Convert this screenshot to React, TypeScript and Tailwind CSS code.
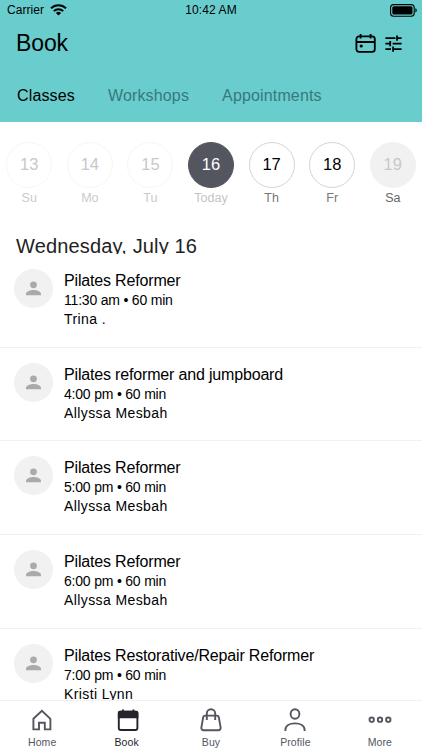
import React from 'react';

interface Day {
  date: number;
  label: string;
  circle: string;
  text: string;
}

interface ClassItem {
  title: string;
  time: string;
  instructor: string;
}

const pastDay = 'border-[#f6f6f6] text-[#c8c8c8]';
const openDay = 'border-[#d4d4d4] text-black';

const days: Day[] = [
  { date: 13, label: 'Su', circle: pastDay, text: 'text-[#cacaca]' },
  { date: 14, label: 'Mo', circle: pastDay, text: 'text-[#cacaca]' },
  { date: 15, label: 'Tu', circle: pastDay, text: 'text-[#cacaca]' },
  { date: 16, label: 'Today', circle: 'border-[#53555f] bg-[#53555f] text-white', text: 'text-[#c4c4c4]' },
  { date: 17, label: 'Th', circle: openDay, text: 'text-[#777]' },
  { date: 18, label: 'Fr', circle: openDay, text: 'text-[#777]' },
  { date: 19, label: 'Sa', circle: 'border-[#f1f1f1] bg-[#f1f1f1] text-[#c8c8c8]', text: 'text-[#666]' },
];

const classes: ClassItem[] = [
  { title: 'Pilates Reformer', time: '11:30 am • 60 min', instructor: 'Trina .' },
  { title: 'Pilates reformer and jumpboard', time: '4:00 pm • 60 min', instructor: 'Allyssa Mesbah' },
  { title: 'Pilates Reformer', time: '5:00 pm • 60 min', instructor: 'Allyssa Mesbah' },
  { title: 'Pilates Reformer', time: '6:00 pm • 60 min', instructor: 'Allyssa Mesbah' },
  { title: 'Pilates Restorative/Repair Reformer', time: '7:00 pm • 60 min', instructor: 'Kristi Lynn' },
];

const StatusBar = () => (
  <div className="grid h-5 grid-cols-3 items-center pl-[7px] pr-1 text-[12px] leading-5">
    <div className="flex items-center gap-[6px]">
      <span className="tracking-[0.05px]">Carrier</span>
      <svg width="17" height="12" viewBox="0 0 17 12" fill="none" stroke="black" strokeWidth="2">
        <path d="M1 4.3a10.6 10.6 0 0 1 15 0" />
        <path d="M3.8 7.1a6.7 6.7 0 0 1 9.4 0" />
        <path d="M8.5 11.6 5.9 9a3.7 3.7 0 0 1 5.2 0Z" fill="black" stroke="none" />
      </svg>
    </div>
    <span className="pr-[3px] text-center tracking-[0.1px]">10:42 AM</span>
    <svg className="justify-self-end" width="28" height="13" viewBox="0 0 28 13">
      <rect x=".6" y=".6" width="23.6" height="11.6" rx="3" fill="none" stroke="black" strokeWidth="1.1" />
      <rect x="2.3" y="2.3" width="20.2" height="8.2" rx="1.5" />
      <path d="M25.4 4.3c1.8.5 1.8 3.7 0 4.2Z" />
    </svg>
  </div>
);

const Header = () => (
  <header className="h-[122px] shrink-0 bg-[#69cccd] text-black">
    <StatusBar />
    <div className="flex h-[46px] items-center justify-between pl-4 pr-[20px]">
      <h1 className="text-[23px] leading-[45px] tracking-[-0.1px]">Book</h1>
      <div className="flex items-center gap-[9px]">
        <svg width="21" height="19" viewBox="0 0 21 19" fill="none" stroke="black" strokeWidth="1.8">
          <rect x="1.4" y="2.4" width="18.4" height="15.4" rx="2.6" />
          <path d="M1.4 8h18.4M5.6 0v4.6M15.6 0v4.6" />
          <circle cx="6.2" cy="12" r="1.6" fill="black" stroke="none" />
        </svg>
        <svg width="17" height="17" viewBox="0 0 17 17" fill="none" stroke="black" strokeWidth="1.8">
          <path d="M.4 3.2h10M12 .6v5.2M12 3.2h4.6M.4 8.7h4.8M5.2 6.1v5.2M7.6 8.7h9M.4 14.1H6M8.1 11.5v5.2M8.1 14.1h8.5" />
        </svg>
      </div>
    </div>
    <nav className="flex h-[60px] items-center gap-[33px] pl-[17px] text-[16px] tracking-[0.15px] text-[#367a7c]">
      <span className="text-black">Classes</span>
      <span>Workshops</span>
      <span>Appointments</span>
    </nav>
  </header>
);

const DayStrip = () => (
  <div className="flex h-[112px] shrink-0 justify-center pt-[19.5px]">
    {days.map((day) => (
      <div key={day.date} className="flex w-[60.6px] shrink-0 flex-col items-center">
        <div className={`flex size-[46px] items-center justify-center rounded-full border text-[16.5px] ${day.circle}`}>
          {day.date}
        </div>
        <span className={`mt-px text-[12.5px] leading-[18px] ${day.text}`}>{day.label}</span>
      </div>
    ))}
  </div>
);

const ClassRow: React.FC<{ item: ClassItem }> = ({ item }) => (
  <li className="flex h-[93.7px] shrink-0 gap-[11px] border-b border-[#f1f1f1] pl-[14px] pt-[15px] text-black">
    <div className="flex size-[39px] items-center justify-center rounded-full bg-[#f1f1f1]">
      <svg width="15" height="15" viewBox="0 0 15 15" fill="#aaa">
        <circle cx="7.5" cy="3.8" r="3.4" />
        <path d="M0 14.3v-1.6c0-2.4 4.6-3.8 7.5-3.8s7.5 1.4 7.5 3.8v1.6Z" />
      </svg>
    </div>
    <div>
      <p className="text-[16px] leading-6 tracking-[-0.17px]">{item.title}</p>
      <p className="-mt-px text-[14px] leading-[17px] tracking-[-0.2px]">{item.time}</p>
      <p className="text-[14px] leading-[20px] tracking-[0.4px]">{item.instructor}</p>
    </div>
  </li>
);

const tabs = [
  {
    label: 'Home',
    icon: <path d="M3.4 10.8 11.9 2.8l8.5 8v10.6h-5.6v-6.6H9v6.6H3.4Z" />,
  },
  {
    label: 'Book',
    icon: (
      <>
        <rect x="3.8" y="3.6" width="18.6" height="18.4" rx="2" />
        <path d="M3.8 4.6c0-.6.4-1 1-1h16.6c.6 0 1 .4 1 1v4.8H3.8ZM8 1.4v3M18.4 1.4v3" fill="currentColor" />
      </>
    ),
  },
  {
    label: 'Buy',
    icon: (
      <>
        <path d="M6.2 7.6h11.6c1 0 1.8.6 2 1.6l1.8 10.2c.3 1.6-.6 2.8-2.2 2.8H4.6c-1.6 0-2.5-1.2-2.2-2.8L4.2 9.2c.2-1 1-1.6 2-1.6Z" />
        <path d="M7.8 12V5.4a4.2 4.2 0 0 1 8.4 0V12" />
      </>
    ),
  },
  {
    label: 'Profile',
    icon: (
      <>
        <ellipse cx="12" cy="6" rx="4.4" ry="4.8" />
        <path d="M2.4 23v-1C2.4 17.8 6.6 15.4 12 15.4s9.6 2.4 9.6 6.6v1" />
      </>
    ),
  },
  {
    label: 'More',
    icon: (
      <>
        <circle cx="3.7" cy="11.7" r="2.2" />
        <circle cx="12" cy="11.7" r="2.2" />
        <circle cx="20.3" cy="11.7" r="2.2" />
      </>
    ),
  },
];

const TabBar = () => (
  <nav className="grid h-[50px] shrink-0 grid-cols-5 border-t border-[#f1f1f1] bg-white">
    {tabs.map((tab) => (
      <div
        key={tab.label}
        className={`flex flex-col items-center pt-[7px] ${tab.label === 'Book' ? 'text-[#24252c]' : 'text-[#53555f]'}`}
      >
        <svg className="overflow-visible" width="24" height="24" viewBox="0 0 24 24" fill="none" stroke="currentColor" strokeWidth="1.9">
          {tab.icon}
        </svg>
        <span className="mt-[3px] text-[10.5px] leading-[14px] tracking-[0.1px]">{tab.label}</span>
      </div>
    ))}
  </nav>
);

export default function App() {
  return (
    <div className="flex h-[750px] w-[422px] flex-col overflow-hidden bg-white font-['Liberation_Sans',Arial,sans-serif]">
      <Header />
      <DayStrip />
      <h2 className="h-5 shrink-0 overflow-hidden pl-4 text-[20px] leading-6 tracking-[0.16px] text-[#222]">Wednesday, July 16</h2>
      <ul className="flex min-h-0 flex-1 flex-col overflow-hidden">
        {classes.map((item) => (
          <ClassRow key={item.time} item={item} />
        ))}
      </ul>
      <TabBar />
    </div>
  );
}
